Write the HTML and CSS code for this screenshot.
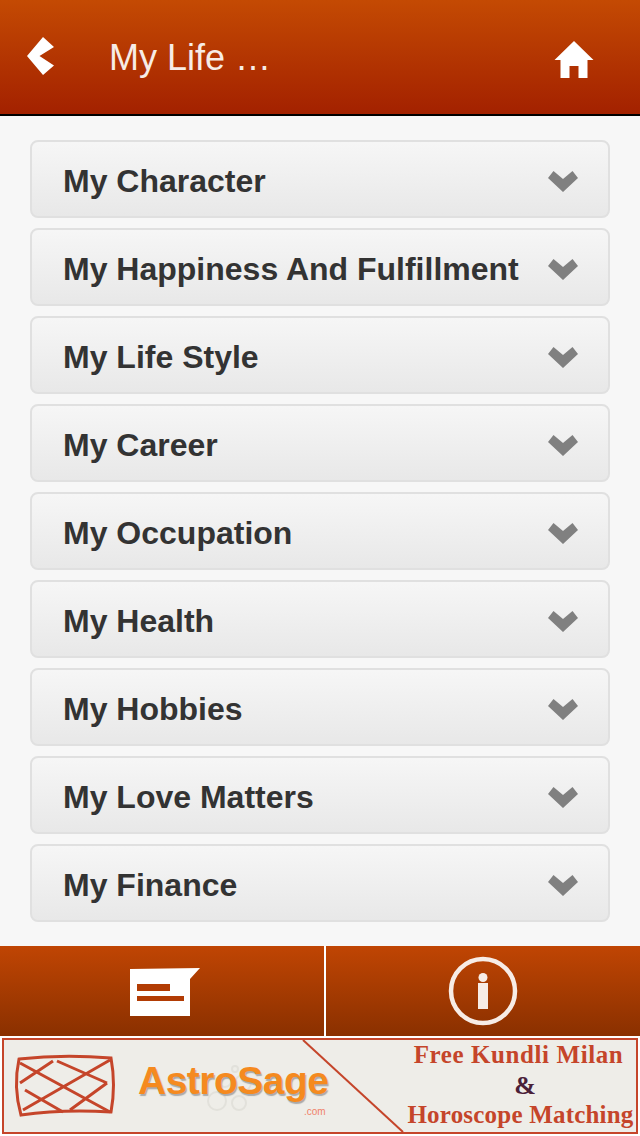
FILE: index.html
```html
<!DOCTYPE html>
<html lang="en">
<head>
<meta charset="utf-8">
<title>My Life</title>
<link rel="stylesheet" href="styles.css">
</head>
<body>
<div class="app">
  <header class="header">
    <svg class="back" width="28" height="38" viewBox="0 0 28 38"><path d="M17 0 L28 10 L13.500 19 L28 28.500 L17 38 L1 19 Z" fill="#fff"/></svg>
    <h1 class="title">My Life …</h1>
    <svg class="home" width="40" height="37" viewBox="0 0 40 37"><path d="M20 0 L39.500 19 L33.500 19 L33.500 37 L24.500 37 L24.500 25 L15.500 25 L15.500 37 L6.500 37 L6.500 19 L0.500 19 Z" fill="#fff"/></svg>
  </header>
  <main class="list">
    <div class="row"><span>My Character</span><svg class="chev" width="30" height="21" viewBox="0 0 30 21"><path d="M5.500 0 L15 8 L24.500 0 L30 7 L15 21 L0 7 Z" fill="#808080"/></svg></div>
    <div class="row"><span>My Happiness And Fulfillment</span><svg class="chev" width="30" height="21" viewBox="0 0 30 21"><path d="M5.500 0 L15 8 L24.500 0 L30 7 L15 21 L0 7 Z" fill="#808080"/></svg></div>
    <div class="row"><span>My Life Style</span><svg class="chev" width="30" height="21" viewBox="0 0 30 21"><path d="M5.500 0 L15 8 L24.500 0 L30 7 L15 21 L0 7 Z" fill="#808080"/></svg></div>
    <div class="row"><span>My Career</span><svg class="chev" width="30" height="21" viewBox="0 0 30 21"><path d="M5.500 0 L15 8 L24.500 0 L30 7 L15 21 L0 7 Z" fill="#808080"/></svg></div>
    <div class="row"><span>My Occupation</span><svg class="chev" width="30" height="21" viewBox="0 0 30 21"><path d="M5.500 0 L15 8 L24.500 0 L30 7 L15 21 L0 7 Z" fill="#808080"/></svg></div>
    <div class="row"><span>My Health</span><svg class="chev" width="30" height="21" viewBox="0 0 30 21"><path d="M5.500 0 L15 8 L24.500 0 L30 7 L15 21 L0 7 Z" fill="#808080"/></svg></div>
    <div class="row"><span>My Hobbies</span><svg class="chev" width="30" height="21" viewBox="0 0 30 21"><path d="M5.500 0 L15 8 L24.500 0 L30 7 L15 21 L0 7 Z" fill="#808080"/></svg></div>
    <div class="row"><span>My Love Matters</span><svg class="chev" width="30" height="21" viewBox="0 0 30 21"><path d="M5.500 0 L15 8 L24.500 0 L30 7 L15 21 L0 7 Z" fill="#808080"/></svg></div>
    <div class="row"><span>My Finance</span><svg class="chev" width="30" height="21" viewBox="0 0 30 21"><path d="M5.500 0 L15 8 L24.500 0 L30 7 L15 21 L0 7 Z" fill="#808080"/></svg></div>
  </main>
  <nav class="tabs">
    <div class="tab tab-left">
      <svg width="70" height="48" viewBox="0 0 70 48"><path d="M0 1 L70 0 L60 11 L60 48 L0 48 Z" fill="#fff"/><rect x="7" y="16" width="33" height="7" fill="#b23c04"/><rect x="7" y="28" width="47" height="5" fill="#b23c04"/></svg>
    </div>
    <div class="tab tab-right">
      <svg width="70" height="70" viewBox="0 0 70 70"><circle cx="35" cy="35" r="32" fill="none" stroke="#f7ece6" stroke-width="4.500"/><circle cx="35" cy="21.500" r="4.500" fill="#f7ece6"/><rect x="30" y="27" width="10" height="26" fill="#f7ece6"/></svg>
    </div>
  </nav>
  <footer class="banner">
    <svg class="banner-art" width="634" height="94" viewBox="0 0 634 94">
      <g fill="none" stroke="#e2e1db" stroke-width="2">
        <circle cx="222" cy="42" r="6"/><circle cx="232" cy="30" r="3"/><circle cx="240" cy="44" r="8"/><circle cx="214" cy="62" r="9"/><circle cx="236" cy="64" r="7"/>
      </g>
      <g fill="none" stroke="#c5452a" stroke-width="3">
        <path d="M16 20 Q60 15 108 19 Q113 46 108 73 Q60 70 18 76 Q10 48 16 20 Z"/>
        <path d="M17 24 L107 73 M54 22 L104 44 M22 51 L60 73 M20 71 L107 21 M17 44 L50 22 M67 71 L104 44"/>
        <path d="M300 1 L400 93" stroke-width="2"/>
      </g>
    </svg>
    <div class="brand">AstroSage<small class="brand-com">.com</small></div>
    <div class="promo">
      <div class="promo-first">Free Kundli Milan</div>
      <div class="amp">&amp;</div>
      <div class="promo-last">Horoscope Matching</div>
    </div>
  </footer>
</div>
</body>
</html>
```
FILE: styles.css
```css
* { box-sizing: border-box; }
html, body { margin: 0; padding: 0; }
body { background: #f7f7f7; font-family: "Liberation Sans", Arial, sans-serif; }
.app { width: 640px; height: 1136px; display: flex; flex-direction: column; overflow: hidden; }

.header {
  height: 116px;
  flex: none;
  display: flex;
  align-items: center;
  padding: 0 46px 2px 26px;
  background: linear-gradient(#c44a03, #a32100);
  border-bottom: 2px solid #000;
}
.back { flex: none; margin-right: 55px; }
.title { margin: 3px 0 0; flex: 1; font-size: 36px; font-weight: 400; color: #f7ece6; }
.home { flex: none; margin: 7px 0 0; }

.list {
  flex: 1;
  padding: 24px 30px 0;
  display: flex;
  flex-direction: column;
  gap: 10px;
}
.row {
  height: 78px;
  flex: none;
  display: flex;
  align-items: center;
  justify-content: space-between;
  padding: 4px 30px 0 31px;
  border: 2px solid #e0e0e0;
  border-radius: 8px;
  background: linear-gradient(#f6f6f6, #e8e8e8);
  font-size: 32px;
  font-weight: 700;
  color: #333;
}
.chev { flex: none; }

.tabs { height: 90px; flex: none; display: flex; background: linear-gradient(#c04503, #8a3000); }
.tab { flex: 1; display: flex; align-items: center; justify-content: center; }
.tab-left svg { margin: 2px 0 0 6px; }
.tab-right { border-left: 2px solid #fff; flex: 0 0 316px; }

.banner {
  height: 100px;
  flex: none;
  margin: 0;
  position: relative;
  background: #fff;
  padding: 2px;
}
.banner-art { position: absolute; left: 3px; top: 3px; }
.banner::before {
  content: "";
  position: absolute;
  left: 2px; right: 2px; top: 2px; bottom: 2px;
  background: #eeede8;
  border: 2px solid #c5452a;
}
.brand {
  position: absolute;
  left: 138px;
  top: 23px;
  font-size: 39px;
  font-weight: 700;
  color: #f58a1f;
  text-shadow: 1px 2px 1px #aaa;
  letter-spacing: -0.5px;
}
.brand-com {
  position: absolute;
  right: 3px;
  top: 47px;
  font-size: 10px;
  font-weight: 400;
  color: #f0826a;
  text-shadow: none;
  letter-spacing: 0;
}
.promo {
  position: absolute;
  right: 3px;
  top: 4px;
  width: 236px;
  text-align: center;
  font-family: "Liberation Serif", serif;
  font-size: 25px;
  line-height: 30px;
  font-weight: 700;
  color: #c5452a;
  white-space: nowrap;
}
.promo-first { letter-spacing: 0.6px; margin-right: 1px; }
.amp { color: #4a2038; font-size: 26px; margin: 1px 0 0 12px; }
.promo-last { letter-spacing: 0.2px; margin: -1px 0 0 3px; }
```
